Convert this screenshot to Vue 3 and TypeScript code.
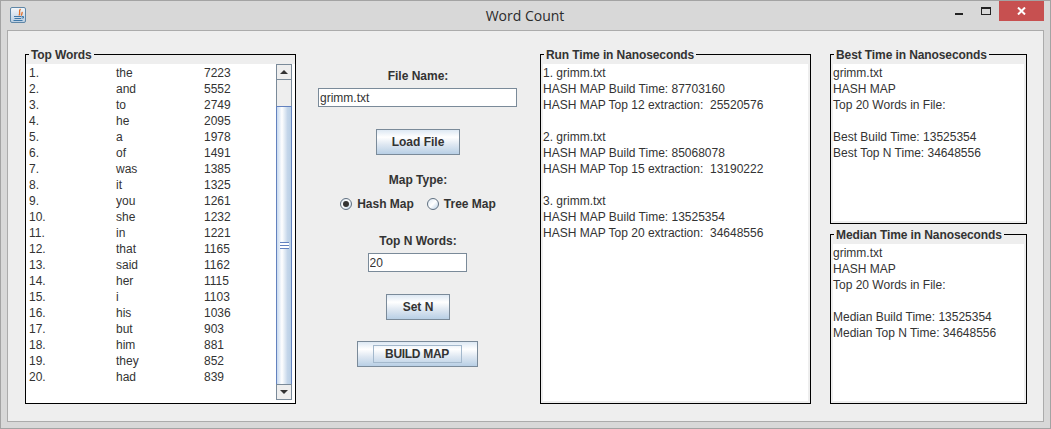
<script setup lang="ts">
const words: [string, number][] = [
  ["the", 7223], ["and", 5552], ["to", 2749], ["he", 2095], ["a", 1978],
  ["of", 1491], ["was", 1385], ["it", 1325], ["you", 1261], ["she", 1232],
  ["in", 1221], ["that", 1165], ["said", 1162], ["her", 1115], ["i", 1103],
  ["his", 1036], ["but", 903], ["him", 881], ["they", 852], ["had", 839],
];

const runTimes = `1. grimm.txt
HASH MAP Build Time: 87703160
HASH MAP Top 12 extraction:  25520576

2. grimm.txt
HASH MAP Build Time: 85068078
HASH MAP Top 15 extraction:  13190222

3. grimm.txt
HASH MAP Build Time: 13525354
HASH MAP Top 20 extraction:  34648556`;

const bestTimes = `grimm.txt
HASH MAP
Top 20 Words in File:

Best Build Time: 13525354
Best Top N Time: 34648556`;

const medianTimes = `grimm.txt
HASH MAP
Top 20 Words in File:

Median Build Time: 13525354
Median Top N Time: 34648556`;
</script>

<template>
  <div class="window">
    <header class="titlebar">
      <div class="appIcon">
        <svg width="16" height="16" viewBox="0 0 16 16">
          <defs>
            <linearGradient id="iconBg" x1="0" y1="0" x2="0" y2="1">
              <stop offset="0" stop-color="#f4f7fa" />
              <stop offset="1" stop-color="#b9cde0" />
            </linearGradient>
          </defs>
          <rect x="0.5" y="0.5" width="15" height="15" rx="1.5" fill="url(#iconBg)" stroke="#5f86a6" />
          <path d="M10.5 2 C8 4.5 11 5.5 9 8.5 M12.5 5 C11.5 6 12.5 7 11 8.5" fill="none" stroke="#e2702a" stroke-width="1.3" />
          <path d="M4 9.5 H11 M4.5 11.5 H11 M3.5 13.5 H12.5 M11.5 9.5 H13.5 V11 H11.5" fill="none" stroke="#3f78a8" stroke-width="1" />
        </svg>
      </div>
      <div class="title">Word Count</div>
      <div class="winButtons">
        <div class="minBtn"><span></span></div>
        <div class="maxBtn"><span></span></div>
        <div class="closeBtn">
          <svg width="9" height="8" viewBox="0 0 9 8">
            <path d="M1 0.5 L8 7.5 M8 0.5 L1 7.5" stroke="#fff" stroke-width="2" />
          </svg>
        </div>
      </div>
    </header>

    <main class="content">
      <fieldset class="titled topWords">
        <legend>Top Words</legend>
        <div class="listArea">
          <div class="list">
            <div v-for="(item, ix) in words" class="row" :key="item[0]">
              <span>{{ ix + 1 }}.</span>
              <span>{{ item[0] }}</span>
              <span>{{ item[1] }}</span>
            </div>
          </div>
          <div class="scrollbar">
            <div class="arrowBtn"><i class="arrowUp"></i></div>
            <div class="track"></div>
            <div class="thumb">
              <div class="grip"></div>
            </div>
            <div class="arrowBtn"><i class="arrowDown"></i></div>
          </div>
        </div>
      </fieldset>

      <section class="controls">
        <label class="fileLabel">File Name:</label>
        <input class="field fileField" value="grimm.txt" />
        <button class="btn loadBtn">Load File</button>
        <label class="mapLabel">Map Type:</label>
        <div class="radios">
          <span class="radio checked"></span>
          <span class="radioText">Hash Map</span>
          <span class="radio"></span>
          <span class="radioText">Tree Map</span>
        </div>
        <label class="topLabel">Top N Words:</label>
        <input class="field topField" value="20" />
        <button class="btn setBtn">Set N</button>
        <button class="btn buildBtn"><span class="focusRect">BUILD MAP</span></button>
      </section>

      <fieldset class="titled runTime">
        <legend>Run Time in Nanoseconds</legend>
        <div class="textArea">{{ runTimes }}</div>
      </fieldset>

      <div class="rightCol">
        <fieldset class="titled side">
          <legend>Best Time in Nanoseconds</legend>
          <div class="textArea">{{ bestTimes }}</div>
        </fieldset>
        <fieldset class="titled side">
          <legend>Median Time in Nanoseconds</legend>
          <div class="textArea">{{ medianTimes }}</div>
        </fieldset>
      </div>
    </main>
  </div>
</template>

<style>
html,
body {
  margin: 0;
  padding: 0;
  background: #d8d8d8;
}
</style>

<style scoped>
.window {
  box-sizing: border-box;
  width: 1051px;
  height: 429px;
  display: flex;
  flex-direction: column;
  background: #d8d8d8;
  border: 1px solid #a3a3a3;
  padding: 0 6px 6px;
  font-family: "Liberation Sans", Arial, sans-serif;
  font-size: 12px;
  line-height: 16px;
  color: #333333;
}

.titlebar {
  height: 29px;
  flex-shrink: 0;
  display: flex;
  margin: 0 -6px;
  padding-left: 9px;
}
.appIcon {
  margin-top: 6px;
  height: 16px;
}
.title {
  flex-grow: 1;
  margin-top: 5px;
  padding-left: 69px;
  text-align: center;
  font-family: "Open Sans", sans-serif;
  font-size: 14px;
  line-height: 20px;
  color: #2b2b2b;
}
.winButtons {
  display: flex;
  margin-right: 6px;
}
.minBtn {
  width: 26px;
  padding-top: 12px;
  box-sizing: border-box;
}
.minBtn span {
  display: block;
  width: 8px;
  height: 2px;
  background: #222;
}
.maxBtn {
  width: 18px;
  padding-top: 6px;
}
.maxBtn span {
  display: block;
  box-sizing: border-box;
  width: 10px;
  height: 8px;
  border: 1px solid #222;
  border-top-width: 2px;
}
.closeBtn {
  width: 45px;
  height: 20px;
  background: #c75050;
  display: flex;
  align-items: center;
  justify-content: center;
}

.content {
  flex-grow: 1;
  display: flex;
  align-items: flex-start;
  background: #eeeeee;
  border: 1px solid #ababab;
  padding: 15px 0 0 17px;
}

.titled {
  box-sizing: border-box;
  margin: 0;
  min-width: 0;
  width: 271px;
  height: 358px;
  padding: 1px 2px 2px;
  border: 1px solid #000;
}
.titled legend {
  padding: 1px 2px 0;
  margin-left: 1px;
  font-weight: bold;
  letter-spacing: -0.1px;
  color: #333333;
  line-height: 16px;
  white-space: nowrap;
}
.topWords {
  padding: 1px 0 0;
}
.topWords legend {
  margin-left: 3px;
}

.listArea {
  height: 339px;
  display: flex;
  background: #fff;
}
.list {
  flex-grow: 1;
  padding: 1px 0 0 3px;
}
.row {
  display: grid;
  grid-template-columns: 87px 88px 1fr;
  height: 16px;
}

.scrollbar {
  width: 16px;
  flex-shrink: 0;
  margin: 0 3px 3px 0;
  display: flex;
  flex-direction: column;
}
.arrowBtn {
  box-sizing: border-box;
  height: 16px;
  flex-shrink: 0;
  background: #eeeeee;
  border: 1px solid #7a8a99;
  display: flex;
  align-items: center;
  justify-content: center;
}
.arrowUp {
  border: 4px solid transparent;
  border-top: none;
  border-bottom: 4px solid #333;
}
.arrowDown {
  border: 4px solid transparent;
  border-bottom: none;
  border-top: 4px solid #333;
}
.track {
  height: 26px;
  flex-shrink: 0;
  background: #eeeeee;
  border-left: 1px solid #7a8a99;
  border-right: 1px solid #7a8a99;
  box-sizing: border-box;
}
.thumb {
  flex-grow: 1;
  box-sizing: border-box;
  border-left: 1px solid #6382bf;
  border-right: 1px solid #6382bf;
  border-top: 1px solid #6382bf;
  background: linear-gradient(to right, #c8daf0 0%, #ffffff 35%, #c4d6ea 75%, #b8cfe5 100%);
  display: flex;
  align-items: center;
  justify-content: center;
}
.grip {
  width: 9px;
  height: 5px;
  border-top: 1px solid #6382bf;
  border-bottom: 1px solid #6382bf;
  background: linear-gradient(#fff 0 2px, #6382bf 2px 3px, #fff 3px);
}

.controls {
  width: 244px;
  height: 358px;
  flex-shrink: 0;
  display: flex;
  flex-direction: column;
  align-items: center;
  font-weight: bold;
}
.controls label {
  display: block;
}
.fileLabel {
  margin-top: 22px;
}
.field {
  box-sizing: border-box;
  display: block;
  height: 19px;
  padding: 0 0 0 1px;
  border: 1px solid #7a8a99;
  border-radius: 0;
  outline: none;
  background: #fff;
  font: 12px "Liberation Sans", Arial, sans-serif;
  color: #333333;
}
.fileField {
  width: 199px;
  margin: 4px 0 0 -1px;
}
.btn {
  box-sizing: border-box;
  display: block;
  height: 26px;
  padding: 0;
  border: 1px solid #7a8a99;
  border-radius: 0;
  background: linear-gradient(#dde8f3 0%, #ffffff 30%, #dfe8f2 60%, #b8cfe5 100%);
  font: bold 12px "Liberation Sans", Arial, sans-serif;
  color: #333333;
}
.loadBtn {
  width: 84px;
  margin-top: 22px;
}
.mapLabel {
  margin-top: 17px;
}
.radios {
  display: flex;
  align-items: center;
  margin-top: 8px;
  height: 16px;
}
.radio {
  box-sizing: border-box;
  width: 12px;
  height: 12px;
  border-radius: 50%;
  border: 1px solid #5f6f80;
  background: linear-gradient(135deg, #dde8f3, #ffffff 50%, #b8cfe5);
  margin-right: 5px;
  display: flex;
  align-items: center;
  justify-content: center;
}
.radio.checked::after {
  content: "";
  width: 6px;
  height: 6px;
  border-radius: 50%;
  background: #333;
}
.radioText {
  margin-right: 13px;
}
.radioText:last-child {
  margin-right: 0;
}
.topLabel {
  margin-top: 21px;
}
.topField {
  width: 99px;
  margin: 4px 0 0 -2px;
}
.setBtn {
  width: 64px;
  margin-top: 22px;
}
.buildBtn {
  width: 121px;
  margin: 21px 0 0 -2px;
  display: flex;
  align-items: center;
  justify-content: center;
  letter-spacing: -0.3px;
}
.focusRect {
  box-sizing: border-box;
  width: 89px;
  height: 18px;
  line-height: 16px;
  border: 1px solid #a3b8cc;
}

.textArea {
  padding-top: 1px;
  box-sizing: border-box;
  background: #fff;
  white-space: pre;
  overflow: hidden;
}
.runTime .textArea {
  height: 337px;
}
.side .textArea {
  height: 157px;
}

.rightCol {
  margin-left: 19px;
  width: 197px;
  display: flex;
  flex-direction: column;
  gap: 2px;
}
.side {
  width: 197px;
  height: 178px;
}
</style>
